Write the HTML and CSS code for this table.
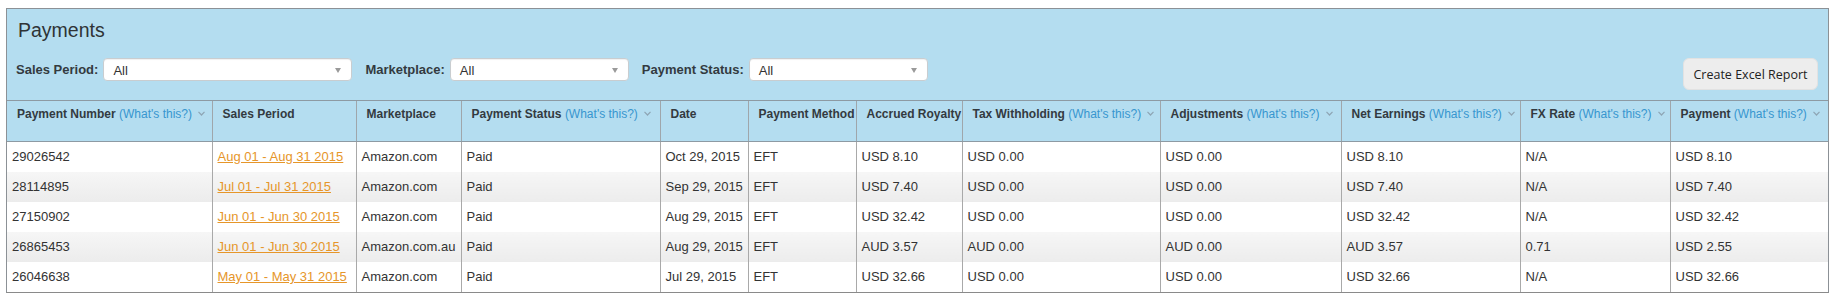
FILE: index.html
```html
<!DOCTYPE html>
<html lang="en">
<head>
<meta charset="utf-8">
<title>Payments</title>
<link rel="stylesheet" href="styles.css">
</head>
<body>
<div class="panel">
  <h1 class="title">Payments</h1>
  <div class="toolbar">
    <div class="filters">
      <div class="filter">
        <span class="filter-label">Sales Period:</span>
        <span class="select select-wide">All<i class="caret"></i></span>
      </div>
      <div class="filter">
        <span class="filter-label">Marketplace:</span>
        <span class="select">All<i class="caret"></i></span>
      </div>
      <div class="filter">
        <span class="filter-label">Payment Status:</span>
        <span class="select">All<i class="caret"></i></span>
      </div>
    </div>
    <button class="btn" type="button">Create Excel Report</button>
  </div>
  <table class="grid">
    <colgroup>
      <col class="w1"><col class="w2"><col class="w3"><col class="w4"><col class="w5"><col class="w6">
      <col class="w7"><col class="w8"><col class="w9"><col class="w10"><col class="w11"><col class="w12">
    </colgroup>
    <thead>
      <tr>
        <th>Payment Number <a class="help">(What's this?)</a><svg class="chev" width="7" height="5" viewBox="0 0 7 5"><polyline points="0.5,0.8 3.5,4 6.5,0.8"/></svg></th>
        <th>Sales Period</th>
        <th>Marketplace</th>
        <th>Payment Status <a class="help">(What's this?)</a><svg class="chev" width="7" height="5" viewBox="0 0 7 5"><polyline points="0.5,0.8 3.5,4 6.5,0.8"/></svg></th>
        <th>Date</th>
        <th>Payment Method</th>
        <th>Accrued Royalty</th>
        <th>Tax Withholding <a class="help">(What's this?)</a><svg class="chev" width="7" height="5" viewBox="0 0 7 5"><polyline points="0.5,0.8 3.5,4 6.5,0.8"/></svg></th>
        <th>Adjustments <a class="help">(What's this?)</a><svg class="chev" width="7" height="5" viewBox="0 0 7 5"><polyline points="0.5,0.8 3.5,4 6.5,0.8"/></svg></th>
        <th>Net Earnings <a class="help">(What's this?)</a><svg class="chev" width="7" height="5" viewBox="0 0 7 5"><polyline points="0.5,0.8 3.5,4 6.5,0.8"/></svg></th>
        <th>FX Rate <a class="help">(What's this?)</a><svg class="chev" width="7" height="5" viewBox="0 0 7 5"><polyline points="0.5,0.8 3.5,4 6.5,0.8"/></svg></th>
        <th>Payment <a class="help">(What's this?)</a><svg class="chev" width="7" height="5" viewBox="0 0 7 5"><polyline points="0.5,0.8 3.5,4 6.5,0.8"/></svg></th>
      </tr>
    </thead>
    <tbody>
      <tr>
        <td>29026542</td><td><a class="period">Aug 01 - Aug 31 2015</a></td><td>Amazon.com</td><td>Paid</td>
        <td>Oct 29, 2015</td><td>EFT</td><td>USD 8.10</td><td>USD 0.00</td><td>USD 0.00</td><td>USD 8.10</td><td>N/A</td><td>USD 8.10</td>
      </tr>
      <tr>
        <td>28114895</td><td><a class="period">Jul 01 - Jul 31 2015</a></td><td>Amazon.com</td><td>Paid</td>
        <td>Sep 29, 2015</td><td>EFT</td><td>USD 7.40</td><td>USD 0.00</td><td>USD 0.00</td><td>USD 7.40</td><td>N/A</td><td>USD 7.40</td>
      </tr>
      <tr>
        <td>27150902</td><td><a class="period">Jun 01 - Jun 30 2015</a></td><td>Amazon.com</td><td>Paid</td>
        <td>Aug 29, 2015</td><td>EFT</td><td>USD 32.42</td><td>USD 0.00</td><td>USD 0.00</td><td>USD 32.42</td><td>N/A</td><td>USD 32.42</td>
      </tr>
      <tr>
        <td>26865453</td><td><a class="period">Jun 01 - Jun 30 2015</a></td><td>Amazon.com.au</td><td>Paid</td>
        <td>Aug 29, 2015</td><td>EFT</td><td>AUD 3.57</td><td>AUD 0.00</td><td>AUD 0.00</td><td>AUD 3.57</td><td>0.71</td><td>USD 2.55</td>
      </tr>
      <tr>
        <td>26046638</td><td><a class="period">May 01 - May 31 2015</a></td><td>Amazon.com</td><td>Paid</td>
        <td>Jul 29, 2015</td><td>EFT</td><td>USD 32.66</td><td>USD 0.00</td><td>USD 0.00</td><td>USD 32.66</td><td>N/A</td><td>USD 32.66</td>
      </tr>
    </tbody>
  </table>
</div>
</body>
</html>
```

FILE: styles.css
```css
html, body {
  background: #ffffff;
}

body {
  margin: 8px 8px 0 6px;
  font-family: "Liberation Sans", Arial, sans-serif;
  color: #333333;
}

.panel {
  background: #b4ddf0;
  border: 1px solid #8c9196;
  border-bottom-color: #8a8a8a;
}

.title {
  margin: 0;
  padding: 10px 0 0 11px;
  font-size: 19.5px;
  line-height: 22px;
  font-weight: normal;
  color: #2f3336;
}

.toolbar {
  display: flex;
  justify-content: space-between;
  align-items: flex-start;
  margin-top: 17px;
  padding: 0 10px 0 9px;
  height: 42px;
}

.filters {
  display: flex;
  align-items: center;
  gap: 13px;
  height: 23px;
}

.filter {
  display: flex;
  align-items: center;
  gap: 5px;
}

.filter-label {
  font-size: 13px;
  font-weight: bold;
  color: #333a40;
}

.select {
  position: relative;
  box-sizing: border-box;
  display: flex;
  align-items: center;
  width: 179px;
  height: 23px;
  padding: 2px 0 0 9px;
  background: #ffffff;
  border: 1px solid #c9cdd0;
  border-radius: 4px;
  box-shadow: inset 0 1px 1px rgba(0, 0, 0, 0.06);
  font-size: 13px;
  color: #333333;
}

.select-wide {
  width: 249px;
}

.caret {
  position: absolute;
  right: 10px;
  top: 9px;
  width: 0;
  height: 0;
  border-left: 3px solid transparent;
  border-right: 3px solid transparent;
  border-top: 5px solid #9a9a9a;
}

.btn {
  box-sizing: border-box;
  width: 135px;
  height: 32px;
  padding: 0;
  border: 1px solid #e2e2e2;
  border-radius: 6px;
  background: #ededed;
  font-family: "Open Sans", "Liberation Sans", sans-serif;
  font-size: 12.5px;
  color: #222222;
}

.grid {
  width: 100%;
  table-layout: fixed;
  border-collapse: collapse;
}

.w1 { width: 205px; }
.w2 { width: 144px; }
.w3 { width: 105px; }
.w4 { width: 199px; }
.w5 { width: 88px; }
.w6 { width: 108px; }
.w7 { width: 106px; }
.w8 { width: 198px; }
.w9 { width: 181px; }
.w10 { width: 179px; }
.w11 { width: 150px; }
.w12 { width: 158px; }

.grid th {
  height: 41px;
  box-sizing: border-box;
  padding: 6px 0 0 10px;
  vertical-align: top;
  text-align: left;
  white-space: nowrap;
  overflow: hidden;
  font-size: 12px;
  line-height: 14px;
  font-weight: bold;
  color: #333a40;
  border-top: 1px solid #8d9aa3;
  border-bottom: 1px solid #8d9aa3;
  border-left: 1px solid #9fa6ab;
}

.grid th:first-child,
.grid td:first-child {
  border-left: none;
}

.help {
  font-weight: normal;
  color: #3796cf;
}

.chev {
  margin-left: 6px;
  vertical-align: 2px;
}

.chev polyline {
  fill: none;
  stroke: #8ea5b4;
  stroke-width: 1.2;
}

.grid td {
  height: 30px;
  box-sizing: border-box;
  padding: 0 0 0 5px;
  white-space: nowrap;
  overflow: hidden;
  font-size: 13px;
  color: #333333;
  background: #ffffff;
  border-left: 1px solid #a9a9a9;
}

.grid tbody tr:nth-child(even) td {
  background: linear-gradient(#f6f6f6, #ececec);
}

.period {
  color: #e6962a;
  text-decoration: underline;
}
```
